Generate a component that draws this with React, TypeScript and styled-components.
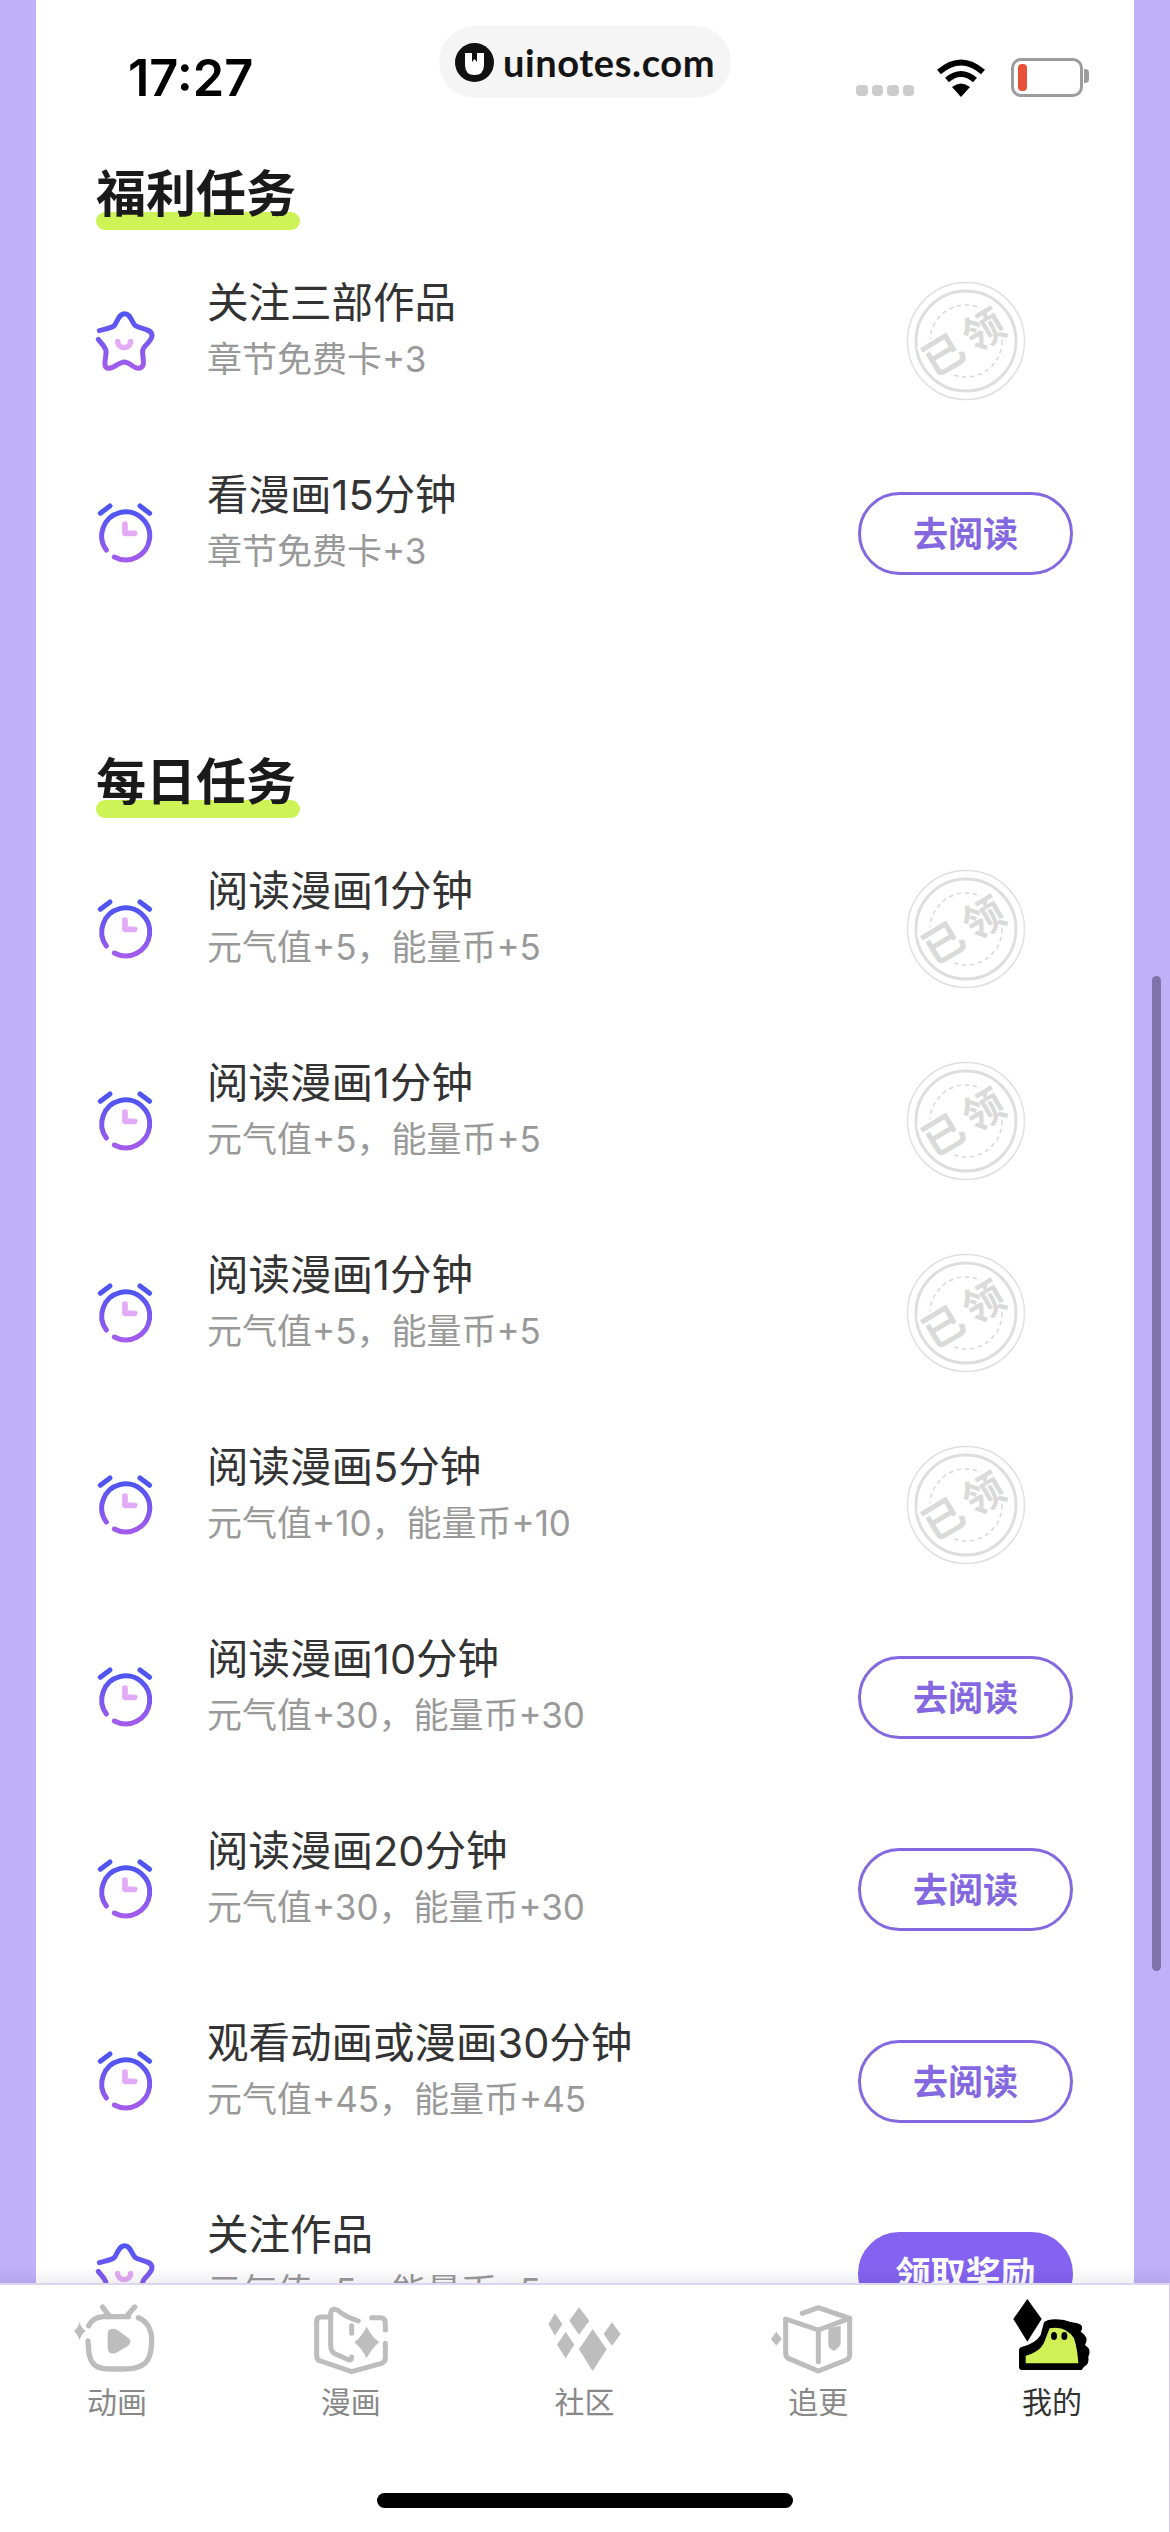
import React from 'react';
import styled, { createGlobalStyle } from 'styled-components';

const GlobalStyle = createGlobalStyle`
  html, body {
    margin: 0;
    padding: 0;
    width: 1170px;
    height: 2532px;
    overflow: hidden;
    background: #fff;
  }
  * {
    box-sizing: border-box;
  }
`;

const CJK = `"Noto Sans CJK SC", "Noto Sans", sans-serif`;
const LATIN_CJK = `Inter, "Noto Sans CJK SC", sans-serif`;
const ICON_GREY = '#bdbdbd';

const Page = styled.div`
  width: 1170px;
  height: 2532px;
  display: flex;
  flex-direction: column;
  font-family: ${CJK};
`;

const Main = styled.main`
  position: relative;
  height: 2283px;
  padding: 0 36px;
  background: #c0b0f8;
  overflow: hidden;
`;

const Card = styled.div`
  height: 100%;
  background: #fff;
`;

const StatusBar = styled.header`
  height: 163px;
  padding-top: 26px;
  display: grid;
  grid-template-columns: 1fr auto 1fr;
  align-items: start;
`;

const Time = styled.div`
  margin-top: 26px;
  padding-left: 92px;
  font-family: Inter, sans-serif;
  font-weight: 600;
  font-size: 50.5px;
  line-height: 52px;
  color: #000;
`;

const Pill = styled.div`
  height: 72px;
  padding: 0 16px 0 16px;
  display: flex;
  align-items: center;
  gap: 9px;
  background: #f5f5f5;
  border-radius: 36px;
`;

const PillText = styled.span`
  font-family: Lato, sans-serif;
  font-weight: 700;
  font-size: 38px;
  letter-spacing: 0.6px;
  color: #141414;
`;

const StatusRight = styled.div`
  margin-top: 32px;
  padding-right: 51px;
  display: flex;
  justify-content: flex-end;
  align-items: flex-end;
`;

const SignalDots = styled.div`
  display: flex;
  gap: 4px;
  margin: 0 22px 1px 0;
`;

const SignalDot = styled.i`
  display: block;
  width: 11.5px;
  height: 11px;
  border-radius: 4px;
  background: #ccc;
`;

const Battery = styled.div`
  position: relative;
  width: 72px;
  height: 39px;
  margin-left: 25px;
  padding: 3px 4px;
  border: 3px solid #9c9c9c;
  border-radius: 10px;

  &::after {
    content: '';
    position: absolute;
    top: 8px;
    right: -9px;
    width: 5px;
    height: 14px;
    border-radius: 0 4px 4px 0;
    background: #9c9c9c;
  }
`;

const BatteryLevel = styled.div`
  width: 9px;
  height: 100%;
  border-radius: 4px;
  background: #e8503a;
`;

const Section = styled.section<{ $gap?: number }>`
  padding: 0 61px 0 54px;
  margin-bottom: ${(p) => p.$gap ?? 0}px;
`;

const Heading = styled.h2`
  position: relative;
  z-index: 0;
  width: fit-content;
  height: 60px;
  margin: 0 0 22px 6px;
  font-size: 50px;
  line-height: 54px;
  font-weight: 700;
  color: #1a1a1a;
  white-space: nowrap;

  &::after {
    content: '';
    position: absolute;
    z-index: -1;
    left: 0;
    right: -4px;
    bottom: -7px;
    height: 18px;
    border-radius: 9px;
    background: #cdf356;
  }
`;

const Row = styled.div`
  height: 192px;
  display: flex;
  align-items: center;
`;

const RowIcon = styled.svg`
  flex: none;
  width: 70px;
  height: 70px;
  margin-right: 47px;
`;

const RowText = styled.div`
  flex: 1;
  padding-bottom: 21px;
`;

const Title = styled.div`
  font-family: ${LATIN_CJK};
  font-size: 41.5px;
  line-height: 56px;
  color: #333;
  white-space: nowrap;
`;

const Sub = styled.div`
  font-family: ${LATIN_CJK};
  font-size: 35px;
  line-height: 56px;
  color: #999;
  white-space: nowrap;
`;

const Action = styled.div`
  flex: none;
  width: 215px;
  display: flex;
  justify-content: center;
`;

const ActionButton = styled.button<{ $filled?: boolean }>`
  width: 215px;
  height: 83px;
  padding: 0 0 4px;
  border: 3px solid ${(p) => (p.$filled ? '#8463f0' : '#8468e0')};
  border-radius: 42px;
  background: ${(p) => (p.$filled ? '#8463f0' : '#fff')};
  color: ${(p) => (p.$filled ? '#fff' : '#8468e0')};
  font-family: inherit;
  font-size: 35px;
  font-weight: 600;
`;

const Stamp = styled.svg`
  width: 120px;
  height: 120px;
`;

const Fade = styled.div`
  position: absolute;
  left: 0;
  right: 0;
  bottom: 0;
  height: 16px;
  background: linear-gradient(rgba(0, 0, 0, 0), rgba(40, 30, 80, 0.07));
`;

const Scrollbar = styled.div`
  position: absolute;
  left: 1152px;
  top: 976px;
  width: 9px;
  height: 995px;
  border-radius: 5px;
  background: #7f72a8;
`;

const TabBar = styled.nav`
  flex: 1;
  padding-top: 10px;
  background: #fff;
  border-top: 2px solid #dcd6f0;
  border-right: 1px solid #d5cbf5;
`;

const Tabs = styled.div`
  display: grid;
  grid-template-columns: repeat(5, 1fr);
`;

const Tab = styled.div<{ $active?: boolean }>`
  display: flex;
  flex-direction: column;
  align-items: center;
  color: ${(p) => (p.$active ? '#333' : '#888')};
  font-size: 30px;
  line-height: 40px;
`;

const TabIcon = styled.svg`
  width: 110px;
  height: 85px;
`;

const HomeIndicator = styled.div`
  width: 416px;
  height: 15px;
  margin: 73px auto 0;
  border-radius: 8px;
  background: #000;
`;

const StarIcon = () => (
  <RowIcon viewBox="90 137 210 210" fill="none">
    <defs>
      <linearGradient id="row-star" x1="0" y1="0" x2="0" y2="1">
        <stop offset="0" stopColor="#4f55f4" />
        <stop offset="1" stopColor="#a35cec" />
      </linearGradient>
    </defs>
    <path
      d="M118 211 C135 206 150 205 163 196 C170 188 176 160 194 160 C212 160 216 188 226 196 C240 205 275 205 276 225 C276 245 250 255 248 270 C246 290 260 322 236 324 C222 325 208 305 193 305 C178 305 160 325 146 324 C125 322 140 290 138 272 C136 258 122 248 115 237"
      stroke="url(#row-star)"
      strokeWidth="15"
      strokeLinecap="round"
    />
    <path d="M173 243 C173 268 212 268 212 243" stroke="#e5aaf5" strokeWidth="16" strokeLinecap="round" />
  </RowIcon>
);

const ClockIcon = () => (
  <RowIcon viewBox="92 713 210 210" fill="none">
    <defs>
      <linearGradient id="row-clock" x1="0" y1="0" x2="0" y2="1">
        <stop offset="0" stopColor="#4f55f4" />
        <stop offset="1" stopColor="#a35cec" />
      </linearGradient>
    </defs>
    <path d="M141 869 A72 72 0 1 1 165 890" stroke="url(#row-clock)" strokeWidth="15" strokeLinecap="round" />
    <path d="M123 759 L152 737" stroke="#5055f2" strokeWidth="15" strokeLinecap="round" />
    <path d="M242 737 L271 759" stroke="#5055f2" strokeWidth="15" strokeLinecap="round" />
    <path d="M197 791 V819 H226" stroke="#e5aaf5" strokeWidth="17" strokeLinecap="round" strokeLinejoin="round" />
  </RowIcon>
);

const ClaimedStamp = () => (
  <Stamp viewBox="0 0 120 120" fill="none">
    <circle cx="60" cy="60" r="58.5" stroke="#e0e0e0" strokeWidth="1.5" />
    <circle cx="60" cy="60" r="50" stroke="#dedede" strokeWidth="3" />
    <circle cx="60" cy="60" r="36" stroke="#d8d8d8" strokeWidth="1.5" strokeDasharray="4.5 3.5" />
    <text
      x="60"
      y="75"
      transform="rotate(-31 60 60)"
      textAnchor="middle"
      fontFamily={CJK}
      fontSize="41"
      fontWeight="700"
      letterSpacing="6"
      fill="#dadada"
      stroke="#fff"
      strokeWidth="5"
      paintOrder="stroke"
    >
      已领
    </text>
  </Stamp>
);

const TvIcon = () => (
  <TabIcon viewBox="6 0 330 255" fill="none" stroke={ICON_GREY} strokeWidth="16" strokeLinecap="round">
    <path d="M84 138 C86 170 86 190 100 206 C112 220 130 222 170 222 C210 222 235 222 255 205 C272 190 275 165 275 135 C275 110 265 80 235 68" />
    <path d="M86 92 C95 75 110 66 130 65 L205 65" />
    <path d="M128 36 L148 64 M224 36 L200 64" />
    <path
      d="M143 118 C143 100 160 98 172 105 L200 125 C215 135 215 145 200 155 L172 172 C158 180 143 175 143 160 Z"
      fill={ICON_GREY}
      stroke="none"
    />
    <path d="M59 82 Q64 100 77 108 Q64 118 59 135 Q53 118 42 108 Q53 100 59 82 Z" fill={ICON_GREY} stroke="none" />
  </TabIcon>
);

const BookIcon = () => (
  <TabIcon viewBox="-12 0 330 255" fill="none" stroke={ICON_GREY} strokeWidth="15" strokeLinecap="round" strokeLinejoin="round">
    <path d="M82 66 L64 66 Q50 66 50 80 V182 Q50 195 62 198 L155 230 L245 205 Q256 200 256 190 V145" />
    <path d="M175 78 Q130 62 115 47 Q95 35 92 55 V150 Q92 172 108 178 L140 192 Q155 200 155 186" />
    <path d="M155 115 V92" />
    <path d="M215 68 H240 Q256 68 256 85 V105" />
    <path d="M200 95 Q215 125 238 142 Q215 160 200 190 Q185 160 163 142 Q185 125 200 95 Z" fill={ICON_GREY} stroke="none" />
  </TabIcon>
);

const CommunityIcon = () => (
  <TabIcon viewBox="0 0 330 255" fill={ICON_GREY}>
    <polygon points="78,55 100,88 78,122 58,88" />
    <polygon points="150,37 181,77 150,119 121,77" />
    <polygon points="110,110 136,149 110,190 84,149" />
    <polygon points="191,102 233,163 191,228 150,163" />
    <polygon points="249,82 275,117 249,152 224,117" />
  </TabIcon>
);

const BoxIcon = () => (
  <TabIcon viewBox="12 0 330 255" fill="none" stroke={ICON_GREY} strokeWidth="15" strokeLinecap="round" strokeLinejoin="round">
    <path d="M130 55 L178 38 L272 70 V180 Q272 190 262 195 L178 228 L88 190 Q80 185 80 175 V75" />
    <path d="M80 72 L178 105 L272 70" />
    <path d="M178 105 V200" />
    <path d="M208 100 V150 Q208 160 225 168 Q245 155 245 145 V92 Z" fill={ICON_GREY} stroke="none" />
    <polygon points="52,110 68,132 52,152 36,132" fill={ICON_GREY} stroke="none" />
  </TabIcon>
);

const MascotIcon = () => (
  <TabIcon viewBox="-6 0 330 255" fill="#000">
    <polygon points="85,12 128,72 85,140 43,72" />
    <path d="M135 82 Q150 68 195 75 Q215 82 235 85 Q258 90 245 110 Q272 125 258 150 Q280 165 268 185 Q272 208 255 215 L248 225 H70 Q60 225 60 215 V165 Q60 158 70 155 Q110 145 125 120 Z" />
    <path d="M152 100 Q200 90 225 130 Q235 160 238 205 H80 V182 Q130 170 140 130 Z" fill="#d0f055" />
    <ellipse cx="165" cy="123" rx="9" ry="12" />
    <ellipse cx="196" cy="123" rx="9" ry="12" />
  </TabIcon>
);

type Task = {
  icon: 'star' | 'clock';
  title: string;
  sub: string;
  state: 'done' | 'read' | 'claim';
};

const welfareTasks: Task[] = [
  { icon: 'star', title: '关注三部作品', sub: '章节免费卡+3', state: 'done' },
  { icon: 'clock', title: '看漫画15分钟', sub: '章节免费卡+3', state: 'read' },
];

const dailyTasks: Task[] = [
  { icon: 'clock', title: '阅读漫画1分钟', sub: '元气值+5，能量币+5', state: 'done' },
  { icon: 'clock', title: '阅读漫画1分钟', sub: '元气值+5，能量币+5', state: 'done' },
  { icon: 'clock', title: '阅读漫画1分钟', sub: '元气值+5，能量币+5', state: 'done' },
  { icon: 'clock', title: '阅读漫画5分钟', sub: '元气值+10，能量币+10', state: 'done' },
  { icon: 'clock', title: '阅读漫画10分钟', sub: '元气值+30，能量币+30', state: 'read' },
  { icon: 'clock', title: '阅读漫画20分钟', sub: '元气值+30，能量币+30', state: 'read' },
  { icon: 'clock', title: '观看动画或漫画30分钟', sub: '元气值+45，能量币+45', state: 'read' },
  { icon: 'star', title: '关注作品', sub: '元气值+5，能量币+5', state: 'claim' },
];

const TaskRow = ({ task }: { task: Task }) => (
  <Row>
    {task.icon === 'star' ? <StarIcon /> : <ClockIcon />}
    <RowText>
      <Title>{task.title}</Title>
      <Sub>{task.sub}</Sub>
    </RowText>
    <Action>
      {task.state === 'done' && <ClaimedStamp />}
      {task.state === 'read' && <ActionButton>去阅读</ActionButton>}
      {task.state === 'claim' && <ActionButton $filled>领取奖励</ActionButton>}
    </Action>
  </Row>
);

const tabs = [
  { label: '动画', icon: <TvIcon /> },
  { label: '漫画', icon: <BookIcon /> },
  { label: '社区', icon: <CommunityIcon /> },
  { label: '追更', icon: <BoxIcon /> },
  { label: '我的', icon: <MascotIcon />, active: true },
];

const App = () => (
  <Page>
    <GlobalStyle />
    <Main>
      <Card>
        <StatusBar>
          <Time>17:27</Time>
          <Pill>
            <svg width="39" height="39" viewBox="0 0 39 39">
              <circle cx="19.5" cy="19.5" r="19.5" fill="#111" />
              <path d="M10 10 H29 V22 Q29 32 19.5 32 Q10 32 10 22 Z" fill="#fff" />
              <path d="M17 10 V19 L19.5 16 L22 19 V10 Z" fill="#111" />
            </svg>
            <PillText>uinotes.com</PillText>
          </Pill>
          <StatusRight>
            <SignalDots>
              <SignalDot />
              <SignalDot />
              <SignalDot />
              <SignalDot />
            </SignalDots>
            <svg width="50" height="38" viewBox="0 0 50 38" fill="none" stroke="#000" strokeWidth="6">
              <path d="M3 13 Q25 -6 47 13" />
              <path d="M11 21 Q25 9 39 21" />
              <path d="M25 38 L16 28 Q25 21 34 28 Z" fill="#000" stroke="none" />
            </svg>
            <Battery>
              <BatteryLevel />
            </Battery>
          </StatusRight>
        </StatusBar>
        <Section $gap={122}>
          <Heading>福利任务</Heading>
          {welfareTasks.map((task) => (
            <TaskRow key={task.title} task={task} />
          ))}
        </Section>
        <Section>
          <Heading>每日任务</Heading>
          {dailyTasks.map((task, i) => (
            <TaskRow key={i} task={task} />
          ))}
        </Section>
      </Card>
      <Scrollbar />
      <Fade />
    </Main>
    <TabBar>
      <Tabs>
        {tabs.map((tab) => (
          <Tab key={tab.label} $active={tab.active}>
            {tab.icon}
            {tab.label}
          </Tab>
        ))}
      </Tabs>
      <HomeIndicator />
    </TabBar>
  </Page>
);

export default App;
